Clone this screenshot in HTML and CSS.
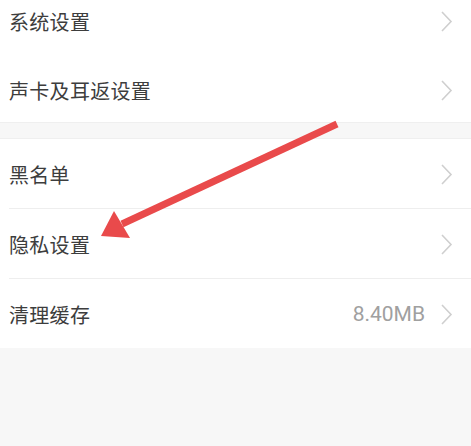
FILE: index.html
```html
<!DOCTYPE html>
<html lang="zh-CN">
<head>
<meta charset="utf-8">
<link rel="stylesheet" href="styles.css">
</head>
<body>
<div class="page">
  <div class="group group-first">
    <div class="row"><span class="label">系统设置</span><span class="right"><svg class="chev" width="13" height="21" viewBox="0 0 13 21"><polyline points="2,1 11,10.5 2,20" fill="none" stroke="#cfcfcf" stroke-width="1.6"/></svg></span></div>
    <div class="row"><span class="label">声卡及耳返设置</span><span class="right"><svg class="chev" width="13" height="21" viewBox="0 0 13 21"><polyline points="2,1 11,10.5 2,20" fill="none" stroke="#cfcfcf" stroke-width="1.6"/></svg></span></div>
  </div>
  <div class="group group-second">
    <div class="row divided"><span class="label">黑名单</span><span class="right"><svg class="chev" width="13" height="21" viewBox="0 0 13 21"><polyline points="2,1 11,10.5 2,20" fill="none" stroke="#cfcfcf" stroke-width="1.6"/></svg></span></div>
    <div class="row divided"><span class="label">隐私设置</span><span class="right"><svg class="chev" width="13" height="21" viewBox="0 0 13 21"><polyline points="2,1 11,10.5 2,20" fill="none" stroke="#cfcfcf" stroke-width="1.6"/></svg></span></div>
    <div class="row"><span class="label">清理缓存</span><span class="right"><span class="value">8.40MB</span><svg class="chev" width="13" height="21" viewBox="0 0 13 21"><polyline points="2,1 11,10.5 2,20" fill="none" stroke="#cfcfcf" stroke-width="1.6"/></svg></span></div>
  </div>
  <svg class="arrow" width="471" height="446" viewBox="0 0 471 446">
    <line x1="122" y1="224" x2="337" y2="124" stroke="#e94a4b" stroke-width="7"/>
    <polygon points="101,236 114,211 130,238" fill="#e94a4b"/>
  </svg>
</div>
</body>
</html>
```
FILE: styles.css
```css
html, body {
  margin: 0;
  padding: 0;
  background: #f7f7f7;
  font-family: "Noto Sans CJK SC", "Noto Sans", sans-serif;
}
.page {
  position: relative;
  width: 471px;
  height: 446px;
  overflow: hidden;
}
.group {
  background: #ffffff;
}
.group-first {
  margin-top: -16px;
  border-bottom: 1px solid #efefef;
}
.group-second {
  margin-top: 15px;
  border-top: 1px solid #efefef;
}
.row {
  height: 69px;
  box-sizing: border-box;
  padding: 1px 18px 0 9px;
  display: flex;
  align-items: center;
  justify-content: space-between;
}
.group-first .row {
  padding-top: 5px;
}
.row.divided {
  height: 70px;
  border-bottom: 1px solid #eeeeee;
  margin-left: 9px;
  padding-left: 0;
}
.label {
  font-size: 20px;
  color: #3d3d3d;
  letter-spacing: 0.3px;
}
.right {
  display: flex;
  align-items: center;
}
.value {
  font-family: "Roboto", "Noto Sans", sans-serif;
  font-size: 21px;
  color: #a0a0a0;
  margin-right: 15px;
}
.chev {
  display: block;
}
.arrow {
  position: absolute;
  left: 0;
  top: 0;
}
```
